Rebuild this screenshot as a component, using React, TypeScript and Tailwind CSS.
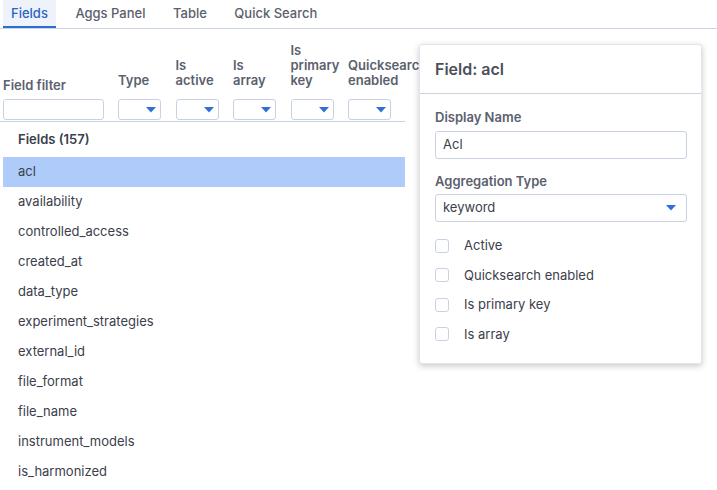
import { useState } from "react";

const tabs = ["Fields", "Aggs Panel", "Table", "Quick Search"];

const columns = [
  { id: "type", lines: ["Type"] },
  { id: "active", lines: ["Is", "active"] },
  { id: "array", lines: ["Is", "array"] },
  { id: "primary", lines: ["Is", "primary", "key"] },
  { id: "quick", lines: ["Quicksearch", "enabled"] },
];

const fields = [
  "acl",
  "availability",
  "controlled_access",
  "created_at",
  "data_type",
  "experiment_strategies",
  "external_id",
  "file_format",
  "file_name",
  "instrument_models",
  "is_harmonized",
];

const options = ["Active", "Quicksearch enabled", "Is primary key", "Is array"];

function Caret() {
  return (
    <svg width="10" height="6" viewBox="0 0 10 6" className="shrink-0">
      <path d="M0 0 H10 L5 5.5 Z" fill="#2f6fdc" />
    </svg>
  );
}

function SmallSelect() {
  return (
    <div className="flex h-[21px] w-[43px] items-center justify-end rounded-[3px] border border-[#c8d2e2] bg-white pr-[4px]">
      <Caret />
    </div>
  );
}

export default function App() {
  const [active, setActive] = useState("Fields");
  const [selected, setSelected] = useState("acl");

  return (
    <div
      className="relative h-[490px] w-[717px] overflow-hidden bg-white text-[13px] text-[#3b404b]"
      style={{ fontFamily: "Inter, 'Liberation Sans', sans-serif" }}
    >
      {/* tabs */}
      <div className="flex h-[29px] gap-[11.5px] border-b border-[#cdd6e4] pl-[3px]">
        {tabs.map((tab) => {
          const isActive = tab === active;
          return (
            <button
              key={tab}
              type="button"
              onClick={() => setActive(tab)}
              className={[
                "h-[28px] px-2 font-medium",
                isActive
                  ? "border-b-2 border-[#2b6ccc] bg-[#eef3fb] pt-[2px] text-[#2b63c0]"
                  : "text-[#5a606c]",
              ].join(" ")}
            >
              {tab}
            </button>
          );
        })}
      </div>

      {/* field list */}
      <div className="w-[405px] pt-[14px]">
        <div className="flex items-end gap-[14px] border-b border-[#c8d2e2] pb-[1px] pl-[3px] font-semibold leading-[15px] text-[#5b616d]">
          <div className="flex w-[101px] flex-col">
            <div className="mb-[6px]">Field filter</div>
            <div className="h-[21px] w-[101px] rounded-[3px] border border-[#c8d2e2] bg-white" />
          </div>
          {columns.map((col) => (
            <div key={col.id} className="flex w-[43.5px] flex-col">
              <div className="mb-[11px] whitespace-nowrap">
                {col.lines.map((l) => (
                  <div key={l}>{l}</div>
                ))}
              </div>
              <SmallSelect />
            </div>
          ))}
        </div>

        <div className="flex h-[35px] items-center pl-[18px] font-semibold text-[#3b404b]">
          Fields (157)
        </div>

        <div className="pl-[3px]">
          {fields.map((f) => (
            <div
              key={f}
              onClick={() => setSelected(f)}
              className={[
                "flex h-[30px] items-center pl-[15px]",
                f === selected ? "bg-[#aecbfa]" : "",
              ].join(" ")}
            >
              {f}
            </div>
          ))}
        </div>
      </div>

      {/* detail panel */}
      <div className="absolute left-[419px] top-[44px] w-[283px] rounded-[3px] border border-[#e2e6ec] bg-white shadow-[0_2px_6px_rgba(0,0,0,0.22)]">
        <div className="flex h-[49px] items-center border-b border-[#cbd3df] px-[15px] text-[16px] font-semibold text-[#4a505c]">
          Field: {selected}
        </div>
        <div className="px-[15px] pb-[14px] pt-[14px]">
          <div className="font-semibold text-[#5b616d]">Display Name</div>
          <div className="mt-[3px] flex h-[28px] w-[252px] items-center rounded-[3px] border border-[#c8d2e2] px-[7px]">
            Acl
          </div>
          <div className="mt-[13px] font-semibold text-[#5b616d]">Aggregation Type</div>
          <div className="mt-[3px] flex h-[28px] w-[252px] items-center justify-between rounded-[3px] border border-[#c8d2e2] pl-[7px] pr-[10px]">
            <span>keyword</span>
            <Caret />
          </div>
          <div className="mt-[9px] flex flex-col">
            {options.map((o) => (
              <label key={o} className="flex h-[29.5px] items-center gap-[15px]">
                <span className="h-[14px] w-[14px] rounded-[3px] border border-[#c8d2e2] bg-white" />
                <span>{o}</span>
              </label>
            ))}
          </div>
        </div>
      </div>
    </div>
  );
}
